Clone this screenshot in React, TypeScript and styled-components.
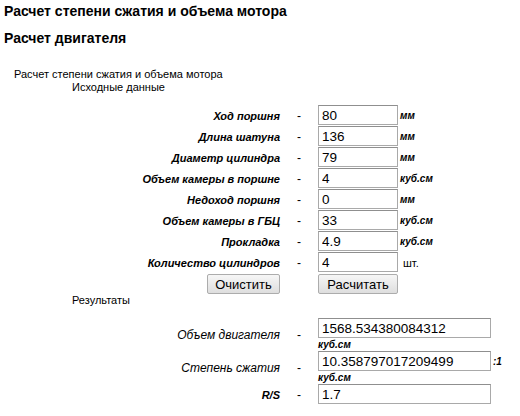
import React from 'react'
import styled, { createGlobalStyle } from 'styled-components'

const GlobalStyle = createGlobalStyle`
  html, body {
    margin: 0;
    padding: 0;
    background: #fff;
  }
  body {
    font-family: "Liberation Sans", Arial, sans-serif;
    color: #000;
  }
`

const Page = styled.div`
  width: 520px;
  height: 416px;
  overflow: hidden;
  padding: 3px 0 0 4px;
  box-sizing: border-box;
`

const Heading = styled.h2<{ $gap: number }>`
  margin: 0 0 ${({ $gap }) => $gap}px;
  font-size: 14px;
  line-height: 16px;
  font-weight: bold;
`

const Caption = styled.div`
  width: 228px;
  padding-left: 10px;
  font-size: 11px;
  line-height: 13px;
`

const SubCaption = styled.div`
  padding-left: 68px;
  font-size: 11px;
  line-height: 13px;
`

const Form = styled.div<{ $top?: number }>`
  display: grid;
  grid-template-columns: 276px 38px max-content max-content;
  justify-content: start;
  align-items: center;
  margin-top: ${({ $top }) => $top ?? 0}px;
`

const Label = styled.div<{ $bold?: boolean; $size?: number }>`
  text-align: right;
  font-style: italic;
  font-weight: ${({ $bold }) => ($bold ? 'bold' : 'normal')};
  font-size: ${({ $size }) => $size ?? 11}px;
  white-space: nowrap;
`

const Dash = styled.div`
  text-align: center;
  font-size: 12px;
`

const Cell = styled.div<{ $h: number }>`
  height: ${({ $h }) => $h}px;
  display: flex;
  flex-direction: column;
  justify-content: flex-start;
`

const Field = styled.input<{ $w: number }>`
  box-sizing: border-box;
  width: ${({ $w }) => $w}px;
  height: 20px;
  margin: 0;
  padding: 0 3px;
  border: 1px solid #a9a9a9;
  border-top-color: #8f8f8f;
  font-family: "Liberation Sans", Arial, sans-serif;
  font-size: 13.5px;
  color: #000;
  background: #fff;
  outline: none;
`

const Unit = styled.div<{ $plain?: boolean; $top?: boolean }>`
  padding-left: ${({ $plain }) => ($plain ? 5 : 2)}px;
  font-size: ${({ $plain }) => ($plain ? 11 : 10)}px;
  font-weight: ${({ $plain }) => ($plain ? 'normal' : 'bold')};
  font-style: ${({ $plain }) => ($plain ? 'normal' : 'italic')};
  white-space: nowrap;
  ${({ $top }) => ($top ? 'align-self: start; padding-top: 5px;' : '')}
`

const SubUnit = styled.div`
  font-size: 10px;
  line-height: 13px;
  font-weight: bold;
  font-style: italic;
`

const ButtonCell = styled.div<{ $right?: boolean }>`
  display: flex;
  justify-content: ${({ $right }) => ($right ? 'flex-end' : 'flex-start')};
  padding-top: 1px;
`

const Button = styled.button<{ $w: number }>`
  width: ${({ $w }) => $w}px;
  height: 20px;
  padding: 0;
  border: 1px solid #acacac;
  border-radius: 2px;
  background: linear-gradient(#f6f6f6, #dedede);
  font-family: "Liberation Sans", Arial, sans-serif;
  font-size: 13px;
  color: #000;
`

const Results = styled.div`
  padding: 0 0 11px 68px;
  font-size: 11px;
  line-height: 13px;
`

const inputs = [
  { label: 'Ход поршня', value: '80', unit: 'мм' },
  { label: 'Длина шатуна', value: '136', unit: 'мм' },
  { label: 'Диаметр цилиндра', value: '79', unit: 'мм' },
  { label: 'Объем камеры в поршне', value: '4', unit: 'куб.см' },
  { label: 'Недоход поршня', value: '0', unit: 'мм' },
  { label: 'Объем камеры в ГБЦ', value: '33', unit: 'куб.см' },
  { label: 'Прокладка', value: '4.9', unit: 'куб.см' },
  { label: 'Количество цилиндров', value: '4', unit: 'шт.', plain: true },
]

export default function App() {
  return (
    <Page>
      <GlobalStyle />
      <Heading $gap={11}>Расчет степени сжатия и объема мотора</Heading>
      <Heading $gap={22}>Расчет двигателя</Heading>
      <Caption>Расчет степени сжатия и объема мотора</Caption>
      <SubCaption>Исходные данные</SubCaption>
      <Form $top={11}>
        {inputs.map((row) => (
          <React.Fragment key={row.label}>
            <Label $bold>{row.label}</Label>
            <Dash>-</Dash>
            <Cell $h={21}>
              <Field $w={80} defaultValue={row.value} />
            </Cell>
            <Unit $plain={row.plain}>{row.unit}</Unit>
          </React.Fragment>
        ))}
        <ButtonCell $right>
          <Button $w={73}>Очистить</Button>
        </ButtonCell>
        <div />
        <ButtonCell>
          <Button $w={80}>Расчитать</Button>
        </ButtonCell>
        <div />
      </Form>
      <Results>Результаты</Results>
      <Form>
        <Label $size={12}>Объем двигателя</Label>
        <Dash>-</Dash>
        <Cell $h={33}>
          <Field $w={173} defaultValue="1568.534380084312" />
          <SubUnit>куб.см</SubUnit>
        </Cell>
        <div />
        <Label $size={12}>Степень сжатия</Label>
        <Dash>-</Dash>
        <Cell $h={33}>
          <Field $w={173} defaultValue="10.358797017209499" />
          <SubUnit>куб.см</SubUnit>
        </Cell>
        <Unit $top>:1</Unit>
        <Label $bold>R/S</Label>
        <Dash>-</Dash>
        <Cell $h={21}>
          <Field $w={173} defaultValue="1.7" />
        </Cell>
        <div />
      </Form>
    </Page>
  )
}
